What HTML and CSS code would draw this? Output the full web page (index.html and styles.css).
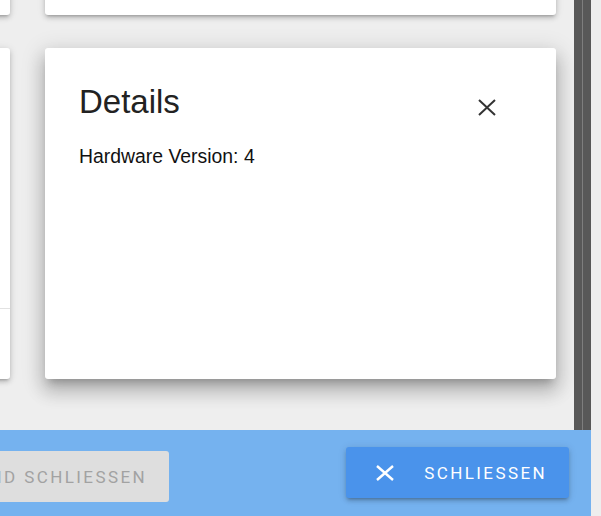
FILE: index.html
```html
<!DOCTYPE html>
<html lang="de">
<head>
  <meta charset="UTF-8">
  <meta name="viewport" content="width=device-width, initial-scale=1.0">
  <title>Details</title>
  <link rel="stylesheet" href="styles.css">
</head>
<body>
  <div class="dialog">
    <div class="dialog-body">
      <div class="scroller">
        <div class="card-grid">
          <div class="card"></div>
          <div class="card"></div>
          <div class="card side-tall">
            <div class="side-top"></div>
          </div>
          <div class="card details">
            <div class="details-head">
              <h2 class="details-title">Details</h2>
              <button class="icon-btn" aria-label="Schließen">
                <svg width="18" height="17" viewBox="0 0 18 17">
                  <path d="M1 1 L17 16 M17 1 L1 16" stroke="#333" stroke-width="2" fill="none"/>
                </svg>
              </button>
            </div>
            <p class="details-line">Hardware Version: 4</p>
          </div>
        </div>
      </div>
      <div class="scrollbar"></div>
    </div>
    <div class="actions">
      <div class="actions-left">
        <button class="btn btn-muted">Speichern und schliessen</button>
      </div>
      <button class="btn btn-primary">
        <svg width="20" height="16" viewBox="0 0 20 16">
          <path d="M2 1 L18 15 M18 1 L2 15" stroke="#fff" stroke-width="2.4" fill="none"/>
        </svg>
        <span>Schliessen</span>
      </button>
    </div>
  </div>
</body>
</html>
```

FILE: styles.css
```css
body {
  margin: 0;
  display: flex;
  height: 516px;
  overflow: hidden;
  background-color: #eeeeee;
  font-family: 'Liberation Sans', Arial, sans-serif;
}
.dialog {
  width: 591px;
  display: flex;
  flex-direction: column;
  flex-shrink: 0;
}
.dialog-body {
  height: 430px;
  display: flex;
  overflow: hidden;
}
.scroller {
  flex: 1;
  overflow: hidden;
}
.card-grid {
  display: grid;
  grid-template-columns: 200px 511px;
  grid-template-rows: 100px 331px;
  column-gap: 35px;
  row-gap: 33px;
  margin-left: -190px;
  margin-top: -85px;
}
.card {
  background: #fff;
  border-radius: 3px;
  box-shadow: 0 3px 3px -2px rgba(0,0,0,0.2), 0 3px 5px 0 rgba(0,0,0,0.14), 0 1px 9px 0 rgba(0,0,0,0.12);
}
.side-top {
  height: 260px;
  border-bottom: 1px solid #e2e2e2;
}
.details {
  padding: 35px 46px 0 34px;
  box-shadow: 0 7px 8px -4px rgba(0,0,0,0.22), 0 12px 17px 2px rgba(0,0,0,0.16), 0 5px 22px 4px rgba(0,0,0,0.12);
}
.details-head {
  display: flex;
  justify-content: space-between;
  align-items: flex-start;
}
.details-title {
  margin: 0;
  font-size: 33px;
  font-weight: 400;
  color: #222;
  line-height: 37px;
}
.icon-btn {
  width: 48px;
  height: 48px;
  margin-right: -1px;
  padding: 0;
  border: none;
  background: none;
  display: flex;
  align-items: center;
  justify-content: center;
}
.details-line {
  margin: 14px 0 0;
  font-size: 19.4px;
  color: #111;
}
.scrollbar {
  width: 17px;
  background: #585858;
  display: flex;
  justify-content: center;
}
.scrollbar::before {
  content: "";
  width: 1px;
  background: #7e7e7e;
}
.actions {
  flex: 1;
  background: #75b2ef;
  display: flex;
  justify-content: space-between;
  align-items: flex-start;
  padding: 17px 22px 0 0;
}
.actions-left {
  width: 169px;
  display: flex;
  justify-content: flex-end;
  margin-top: 4px;
}
.btn {
  height: 51px;
  flex-shrink: 0;
  display: flex;
  align-items: center;
  border: none;
  border-radius: 3px;
  font-family: Roboto, sans-serif;
  font-size: 17px;
  font-weight: 400;
  letter-spacing: 2.4px;
  text-transform: uppercase;
  white-space: nowrap;
}
.btn-muted {
  background: #dedede;
  color: #a2a2a2;
  padding: 0 22px 0 24px;
}
.btn-primary {
  background: #4a93eb;
  color: #fff;
  padding: 0 22px 0 29px;
  gap: 29px;
  box-shadow: 0 3px 3px -2px rgba(0,0,0,0.2), 0 3px 4px 0 rgba(0,0,0,0.14), 0 1px 8px 0 rgba(0,0,0,0.12);
}
```
